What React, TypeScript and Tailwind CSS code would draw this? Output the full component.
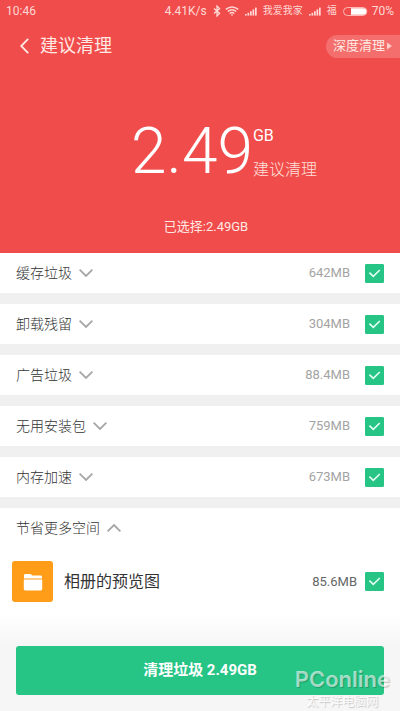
import React, { useState } from "react";

interface JunkItem {
  id: string;
  name: string;
  size: string;
}

const junkList: JunkItem[] = [
  { id: "cache", name: "缓存垃圾", size: "642MB" },
  { id: "uninstall", name: "卸载残留", size: "304MB" },
  { id: "ads", name: "广告垃圾", size: "88.4MB" },
  { id: "apk", name: "无用安装包", size: "759MB" },
  { id: "memory", name: "内存加速", size: "673MB" },
];

const Chevron = ({ up = false }: { up?: boolean }) => (
  <svg
    viewBox="0 0 14 8"
    className={`h-2 w-3.5 ${up ? "rotate-180" : ""}`}
    fill="none"
    stroke="#a6a6a6"
    strokeWidth="1.8"
  >
    <path d="M0.6 0.7 L7 7 L13.4 0.7" />
  </svg>
);

interface CheckProps {
  id: string;
  label: string;
  checked: boolean;
  onChange: () => void;
}

const Check = ({ id, label, checked, onChange }: CheckProps) => (
  <div className="grid size-[19px] shrink-0">
    <input
      id={id}
      type="checkbox"
      aria-label={label}
      checked={checked}
      onChange={onChange}
      className="col-start-1 row-start-1 size-[19px] appearance-none rounded-[1px] border border-[#26c485] bg-white checked:bg-[#26c485]"
    />
    {checked && (
      <svg
        viewBox="0 0 19 19"
        className="pointer-events-none col-start-1 row-start-1 size-[19px]"
        fill="none"
        stroke="#e4fff4"
        strokeWidth="1.6"
      >
        <path d="M4.4 8.6 L8.3 12.4 L14.8 6" />
      </svg>
    )}
  </div>
);

const Signal = () => (
  <svg viewBox="0 0 12 9" className="h-[9px] w-3" fill="#ffd9d6">
    <rect x="0" y="7" width="1.7" height="1.6" />
    <rect x="2.5" y="5.8" width="1.7" height="2.8" />
    <rect x="5" y="4.2" width="1.7" height="4.4" />
    <rect x="7.5" y="2.4" width="1.7" height="6.2" />
    <rect x="10" y="0.6" width="1.7" height="8" />
  </svg>
);

const StatusBar = () => (
  <div className="flex h-[22px] items-center justify-between px-1.5 text-xs text-[#ffd9d6]">
    <span>10:46</span>
    <div className="flex items-center">
      <span>4.41K/s</span>
      <svg
        viewBox="0 0 8 12"
        className="ml-1.5 h-3 w-2"
        fill="none"
        stroke="#ffd9d6"
        strokeWidth="1.3"
      >
        <path d="M1 3.4 L6.6 8.4 L4 11 L4 1 L6.6 3.6 L1 8.6" />
      </svg>
      <svg
        viewBox="0 0 14 10"
        className="ml-1 h-2.5 w-3.5"
        fill="none"
        stroke="#ffd9d6"
        strokeWidth="1.5"
      >
        <path d="M0.8 3.4 Q7 -1.6 13.2 3.4" />
        <path d="M2.8 5.5 Q7 2 11.2 5.5" />
        <path d="M4.7 7.5 Q7 5.6 9.3 7.5" />
        <circle cx="7" cy="8.9" r="0.8" fill="#ffd9d6" stroke="none" />
      </svg>
      <span className="ml-1.5">
        <Signal />
      </span>
      <span className="ml-1.5 text-[10px] leading-4">我爱我家</span>
      <span className="ml-1.5">
        <Signal />
      </span>
      <span className="ml-1.5 text-[10px] leading-4">福</span>
      <svg viewBox="0 0 25 9" className="ml-1.5 h-[9px] w-[25px]">
        <rect
          x="0.5"
          y="0.5"
          width="23.4"
          height="8"
          rx="4"
          fill="none"
          stroke="#ffb9b5"
        />
        <path d="M8 1.2 H20 a3.3 3.3 0 0 1 0 6.6 H8 Z" fill="#fff" />
      </svg>
      <span className="ml-1">70%</span>
    </div>
  </div>
);

const App = () => {
  const [checked, setChecked] = useState<Record<string, boolean>>({
    cache: true,
    uninstall: true,
    ads: true,
    apk: true,
    memory: true,
    album: true,
  });

  const toggle = (id: string) => {
    setChecked({ ...checked, [id]: !checked[id] });
  };

  return (
    <div className="relative flex min-h-screen flex-col bg-white font-[Roboto,'Noto_Sans_CJK_SC',sans-serif]">
      {/* Header */}
      <header className="bg-[#f04c4b] pb-4 text-white">
        <StatusBar />
        <div className="flex h-12 items-center justify-between pl-5">
          <button className="flex items-center gap-[11px]">
            <svg
              viewBox="0 0 9 16"
              className="h-4 w-[9px]"
              fill="none"
              stroke="#ffe9e4"
              strokeWidth="1.8"
            >
              <path d="M8.2 0.8 L1.2 8 L8.2 15.2" />
            </svg>
            <h1 className="text-lg leading-6 text-[#ffe9e4]">建议清理</h1>
          </button>
          <button className="flex h-[23px] items-center gap-0.5 rounded-l-full bg-[#f36e6c] pl-[7px] pr-2 text-[13px] text-[#ffe9e4]">
            深度清理
            <svg viewBox="0 0 5 8" className="h-2 w-[5px]" fill="#ffcdc8">
              <path d="M0 0.5 L5 4 L0 7.5 Z" />
            </svg>
          </button>
        </div>

        <div className="mt-12 flex h-[68px] justify-center pl-12">
          <span className="text-[64px] font-light leading-[68px]">2.49</span>
          <div className="flex flex-col justify-between pb-1.5 pt-2">
            <span className="text-base leading-5">GB</span>
            <span className="text-base font-light leading-5 text-[#ffe0dc]">
              建议清理
            </span>
          </div>
        </div>

        <p className="mt-[31px] pl-3 text-center text-[13px] leading-5 text-[#ffe9e4]">
          已选择:2.49GB
        </p>
      </header>

      {/* Junk list */}
      <main className="flex flex-col gap-[11px] bg-[#f0f0f0]">
        {junkList.map((item) => (
          <div
            key={item.id}
            className="flex h-10 items-center justify-between bg-white px-4"
          >
            <button className="flex items-center gap-[7px] text-sm font-light text-[#333]">
              {item.name}
              <Chevron />
            </button>
            <div className="flex items-center gap-[15px]">
              <span className="text-[13px] text-[#a3a3a3]">{item.size}</span>
              <Check
                id={item.id}
                label={item.name}
                checked={checked[item.id]}
                onChange={() => toggle(item.id)}
              />
            </div>
          </div>
        ))}

        <section className="bg-white">
          <button className="flex h-10 items-center gap-[7px] pl-4 text-sm font-light text-[#333]">
            节省更多空间
            <Chevron up />
          </button>
          <div className="flex h-[67px] items-center pl-3 pr-4">
            <div className="flex size-[41px] items-center justify-center rounded-[3px] bg-[#ff9d18]">
              <svg viewBox="0 0 20 18" className="h-[18px] w-5" fill="#fff">
                <path d="M1 5.4 V2.4 Q1 1 2.4 1 H7 Q8 1 8.6 1.8 L9.2 2.4 H17.6 Q19 2.4 19 3.8 V5.4 Z" />
                <path d="M0.8 6.5 H19.2 V16 Q19.2 17.4 17.8 17.4 H2.2 Q0.8 17.4 0.8 16 Z" />
              </svg>
            </div>
            <span className="ml-[11px] flex-1 text-base text-[#333]">
              相册的预览图
            </span>
            <span className="mr-2 text-[13px] text-[#666]">85.6MB</span>
            <Check
              id="album"
              label="相册的预览图"
              checked={checked.album}
              onChange={() => toggle("album")}
            />
          </div>
        </section>
      </main>

      {/* Clean button */}
      <footer className="relative flex-1 bg-linear-to-b from-white to-[#f6f6f6] to-30% px-4 pb-4 pt-[31px]">
        <button className="h-[49px] w-full rounded-[3px] bg-[#26c485] text-[15px] font-bold text-white">
          清理垃圾 2.49GB
        </button>
        {/* Watermark */}
        <div className="pointer-events-none absolute bottom-0 right-2.5 flex flex-col items-center">
          <span className="font-[Inter,sans-serif] text-[22px] font-semibold leading-[27px] text-white/60 [text-shadow:1px_1px_1px_rgba(0,0,0,0.2)]">
            PConline
          </span>
          <span className="text-xs leading-[18px] text-white/80 [text-shadow:1px_1px_1px_rgba(0,0,0,0.2)]">
            太平洋电脑网
          </span>
        </div>
      </footer>
    </div>
  );
};

export default App;
